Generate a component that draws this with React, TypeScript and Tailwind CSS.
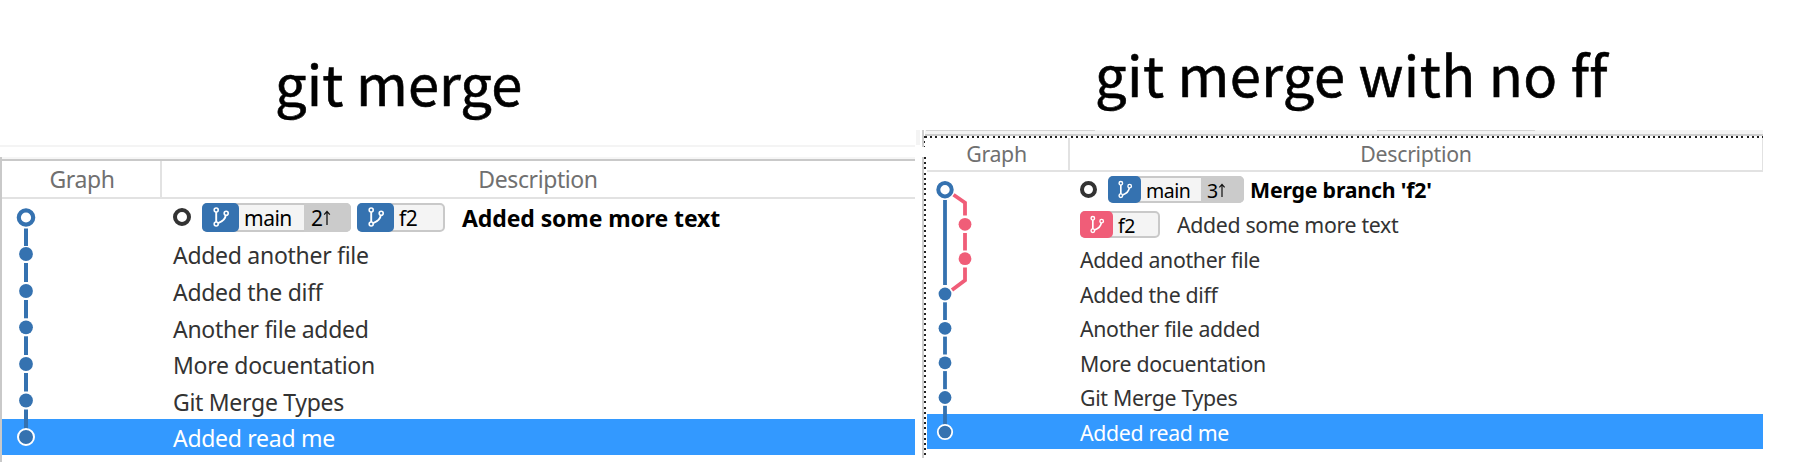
import React from "react";

const BLUE = "#3572b0";
const PINK = "#f05d78";

function BranchIcon({ className }: { className: string }) {
  return (
    <svg className={className} viewBox="0 0 17 20" fill="none" stroke="#fff" strokeWidth="1.6">
      <circle cx="3.2" cy="3" r="2" />
      <circle cx="3.2" cy="17" r="2" />
      <circle cx="13.2" cy="6.2" r="2" />
      <path d="M3.2 5V15M12.8 8.2C12.4 12 9.4 14.6 5.2 16.2" strokeWidth="1.9" />
    </svg>
  );
}

type BadgeProps = {
  label: string;
  count?: string;
  large?: boolean;
  pink?: boolean;
  className: string;
};

function Badge({ label, count, large, pink, className }: BadgeProps) {
  return (
    <span
      className={`flex shrink-0 rounded-[5px] border-2 border-[#c9c9c9] bg-[#f4f4f4] text-black ${large ? "h-[29px]" : "h-[27px]"} ${className}`}
    >
      <span
        className={`-my-[2px] -ml-[2px] flex shrink-0 items-center justify-center rounded-[5px] ${large ? "w-[37px] pl-[2px]" : "w-[33px] pl-[2px]"} ${pink ? "bg-[#f05d78]" : "bg-[#3572b0]"}`}
      >
        <BranchIcon className={large ? "h-[20px] w-[17px]" : "h-[19px] w-[15px]"} />
      </span>
      <span className={`flex flex-1 items-center pt-[3px] ${large ? "pl-[5px] text-[21px] tracking-[-0.5px]" : "pl-[5px] text-[19.5px] tracking-[-0.5px]"}`}>
        {label}
      </span>
      {count && (
        <span
          className={`-my-[2px] -mr-[2px] flex items-center rounded-r-[5px] bg-[#cbcbcb] pt-[3px] ${large ? "w-[47px] pl-[7px] text-[21px]" : "w-[43px] pl-[6px] text-[19.5px]"}`}
        >
          {count}
          <svg className={large ? "mb-[2px] h-[15px] w-[8px]" : "mb-[2px] h-[14px] w-[8px]"} viewBox="0 0 8 15" fill="none" stroke="#111" strokeWidth="1.3">
            <path d="M4 15V1.5M1.2 4.6L4 1.4L6.8 4.6" />
          </svg>
        </span>
      )}
    </span>
  );
}

function Ring({ className }: { className: string }) {
  return <span className={`shrink-0 rounded-full border-[#333] ${className}`} />;
}

const COMMITS = ["Added another file", "Added the diff", "Another file added", "More docuentation", "Git Merge Types"];

function LeftGraph() {
  const ys = [18.5, 55, 92, 128.3, 165, 201.5, 238];
  return (
    <svg className="absolute left-0 top-0 h-[260px] w-[60px]" viewBox="0 0 60 260">
      {ys.slice(1).map((y, i) => (
        <rect key={y} x="22" y={ys[i] + (i === 0 ? 11 : 9)} width="4" height={y - ys[i] - (i === 0 ? 19 : 18) + (i === 5 ? 2 : 0)} fill={BLUE} />
      ))}
      <circle cx="24" cy={ys[0]} r="7.2" fill="#fff" stroke={BLUE} strokeWidth="4.2" />
      {ys.slice(1, 6).map((y) => (
        <circle key={y} cx="24" cy={y} r="6.9" fill={BLUE} />
      ))}
      <circle cx="24" cy={ys[6]} r="8" fill={BLUE} stroke="#fff" strokeWidth="2" />
    </svg>
  );
}

function RightGraph() {
  const ys = [17.7, 122, 156.3, 190.8, 225.5, 260];
  return (
    <svg className="absolute left-0 top-0 h-[280px] w-[60px]" viewBox="0 0 60 280">
      <rect x="18.1" y="28" width="3.8" height="85" fill={BLUE} />
      {ys.slice(2).map((y, i) => (
        <rect key={y} x="18.1" y={ys[i + 1] + 8.3} width="3.8" height={y - ys[i + 1] - (i === 3 ? 15 : 16.6)} fill={BLUE} />
      ))}
      <path d="M28.5 22.8L40 30.7V43.5M40 61V78.5M40 95.5V108.2L27 118" fill="none" stroke={PINK} strokeWidth="3.8" />
      <circle cx="40" cy="52.3" r="6.4" fill={PINK} />
      <circle cx="40" cy="86.7" r="6.4" fill={PINK} />
      <circle cx="20" cy={ys[0]} r="6.7" fill="#fff" stroke={BLUE} strokeWidth="4" />
      {ys.slice(1, 5).map((y) => (
        <circle key={y} cx="20" cy={y} r="6.4" fill={BLUE} />
      ))}
      <circle cx="20" cy={ys[5]} r="7.2" fill={BLUE} stroke="#fff" strokeWidth="1.8" />
    </svg>
  );
}

const TITLE = "whitespace-nowrap font-['Noto_Sans_CJK_SC',sans-serif] text-[56px] leading-[80px] text-black [-webkit-text-stroke:0.6px_#000]";

export default function App() {
  return (
    <div className="flex h-[468px] w-[1796px] overflow-hidden bg-white font-['Noto_Sans',sans-serif]">
      <section className="flex w-[915px] shrink-0 flex-col">
        <div className="h-[145px] pl-[275px] pt-[42px]">
          <h1 className={`${TITLE} tracking-[0.1px]`}>git merge</h1>
        </div>
        <div className="h-[2px] bg-[#f4f4f4]" />
        <div className="mt-[10px] h-[305px] border-l-2 border-[#c9c9c9]">
          <div className="h-[2px] bg-[#f6f6f6]" />
          <div className="h-[2px] bg-[#c9c9c9]" />
          <div className="flex h-[38px] border-b-2 border-[#e2e2e2] text-[23px] tracking-[-0.4px] text-[#707070]">
            <div className="flex w-[160px] items-center justify-center border-r-2 border-[#e2e2e2] pl-[2px]">Graph</div>
            <div className="flex flex-1 items-center justify-center pr-px">Description</div>
          </div>
          <div className="relative text-[23px] tracking-[-0.29px] text-[#333]">
            <div className="flex h-[36.67px] items-center pl-[171px]">
              <Ring className="size-[18px] border-4" />
              <Badge large label="main" count="2" className="ml-[11px] w-[149px]" />
              <Badge large label="f2" className="ml-[6px] w-[88px]" />
              <b className="ml-[17px] whitespace-nowrap pt-[2px] tracking-[-0.1px] text-black">Added some more text</b>
            </div>
            {COMMITS.map((c) => (
              <div key={c} className="flex h-[36.67px] items-center pl-[171px] pt-[3px]">{c}</div>
            ))}
            <div className="flex h-[36px] items-center bg-[#3399ff] pl-[171px] pt-[3px] text-white">Added read me</div>
            <LeftGraph />
          </div>
        </div>
      </section>

      <section className="ml-px flex w-[847px] shrink-0 flex-col">
        <div className="h-[130px] pl-[179px] pt-[33px]">
          <h1 className={`${TITLE} tracking-[0.45px]`}>git merge with no ff</h1>
        </div>
        <div className="flex flex-1">
          <div className="flex w-[6px] shrink-0 flex-col">
            <div className="h-[15px] w-[4px] bg-[#f4f4f4]" />
          </div>
          <div className="flex w-[3px] shrink-0 flex-col">
            <div className="flex h-[17px]">
              <div className="w-[2px] bg-[#cdcdcd]" />
              <div className="mt-[6px] flex-1 bg-[repeating-linear-gradient(to_bottom,#222_0_2px,#fff_2px_5.2px)]" />
            </div>
            <div className="mt-[10px] flex h-[301px]">
              <div className="w-[2px] bg-[#cdcdcd]" />
              <div className="-mr-px w-[2px] bg-[repeating-linear-gradient(to_bottom,#222_0_2px,#fff_2px_5.2px)]" />
            </div>
          </div>
          <div className="flex flex-1 flex-col">
            <div className="flex h-[4px] bg-[#f4f4f4]">
              <div className="ml-px h-px w-[169px] bg-[#d4d4d4]" />
              <div className="ml-[282px] h-px w-[158px] bg-[#d4d4d4]" />
            </div>
            <div className="h-[2px] bg-[#cdcdcd]" />
            <div className="h-[2px] bg-[repeating-linear-gradient(to_right,#222_0_2px,#fff_2px_5.2px)]" />
            <div className="ml-[2px] flex h-[34px] border-b-2 border-r border-[#e2e2e2] text-[21.3px] tracking-[-0.3px] text-[#707070]">
              <div className="flex w-[143px] items-center justify-center border-r-2 border-[#e2e2e2] pr-[2px]">Graph</div>
              <div className="flex flex-1 items-center justify-center">Description</div>
            </div>
            <div className="relative text-[21.3px] tracking-[-0.33px] text-[#333]">
              <div className="flex h-[34.6px] items-center pl-[155px]">
                <Ring className="size-[17px] border-[4px]" />
                <Badge label="main" count="3" className="ml-[11px] w-[136px]" />
                <b className="ml-[6px] whitespace-nowrap pt-[2px] tracking-[-0.2px] text-black">Merge branch 'f2'</b>
              </div>
              <div className="flex h-[34.6px] items-center pl-[155px] pt-px">
                <Badge pink label="f2" className="w-[80px]" />
                <span className="ml-[17px] whitespace-nowrap pt-px">Added some more text</span>
              </div>
              {COMMITS.map((c) => (
                <div key={c} className="flex h-[34.6px] items-center pl-[155px] pt-[3px]">{c}</div>
              ))}
              <div className="ml-[2px] flex h-[34.6px] items-center bg-[#3399ff] pl-[153px] pt-[3px] text-white">Added read me</div>
              <RightGraph />
            </div>
          </div>
        </div>
      </section>
    </div>
  );
}
